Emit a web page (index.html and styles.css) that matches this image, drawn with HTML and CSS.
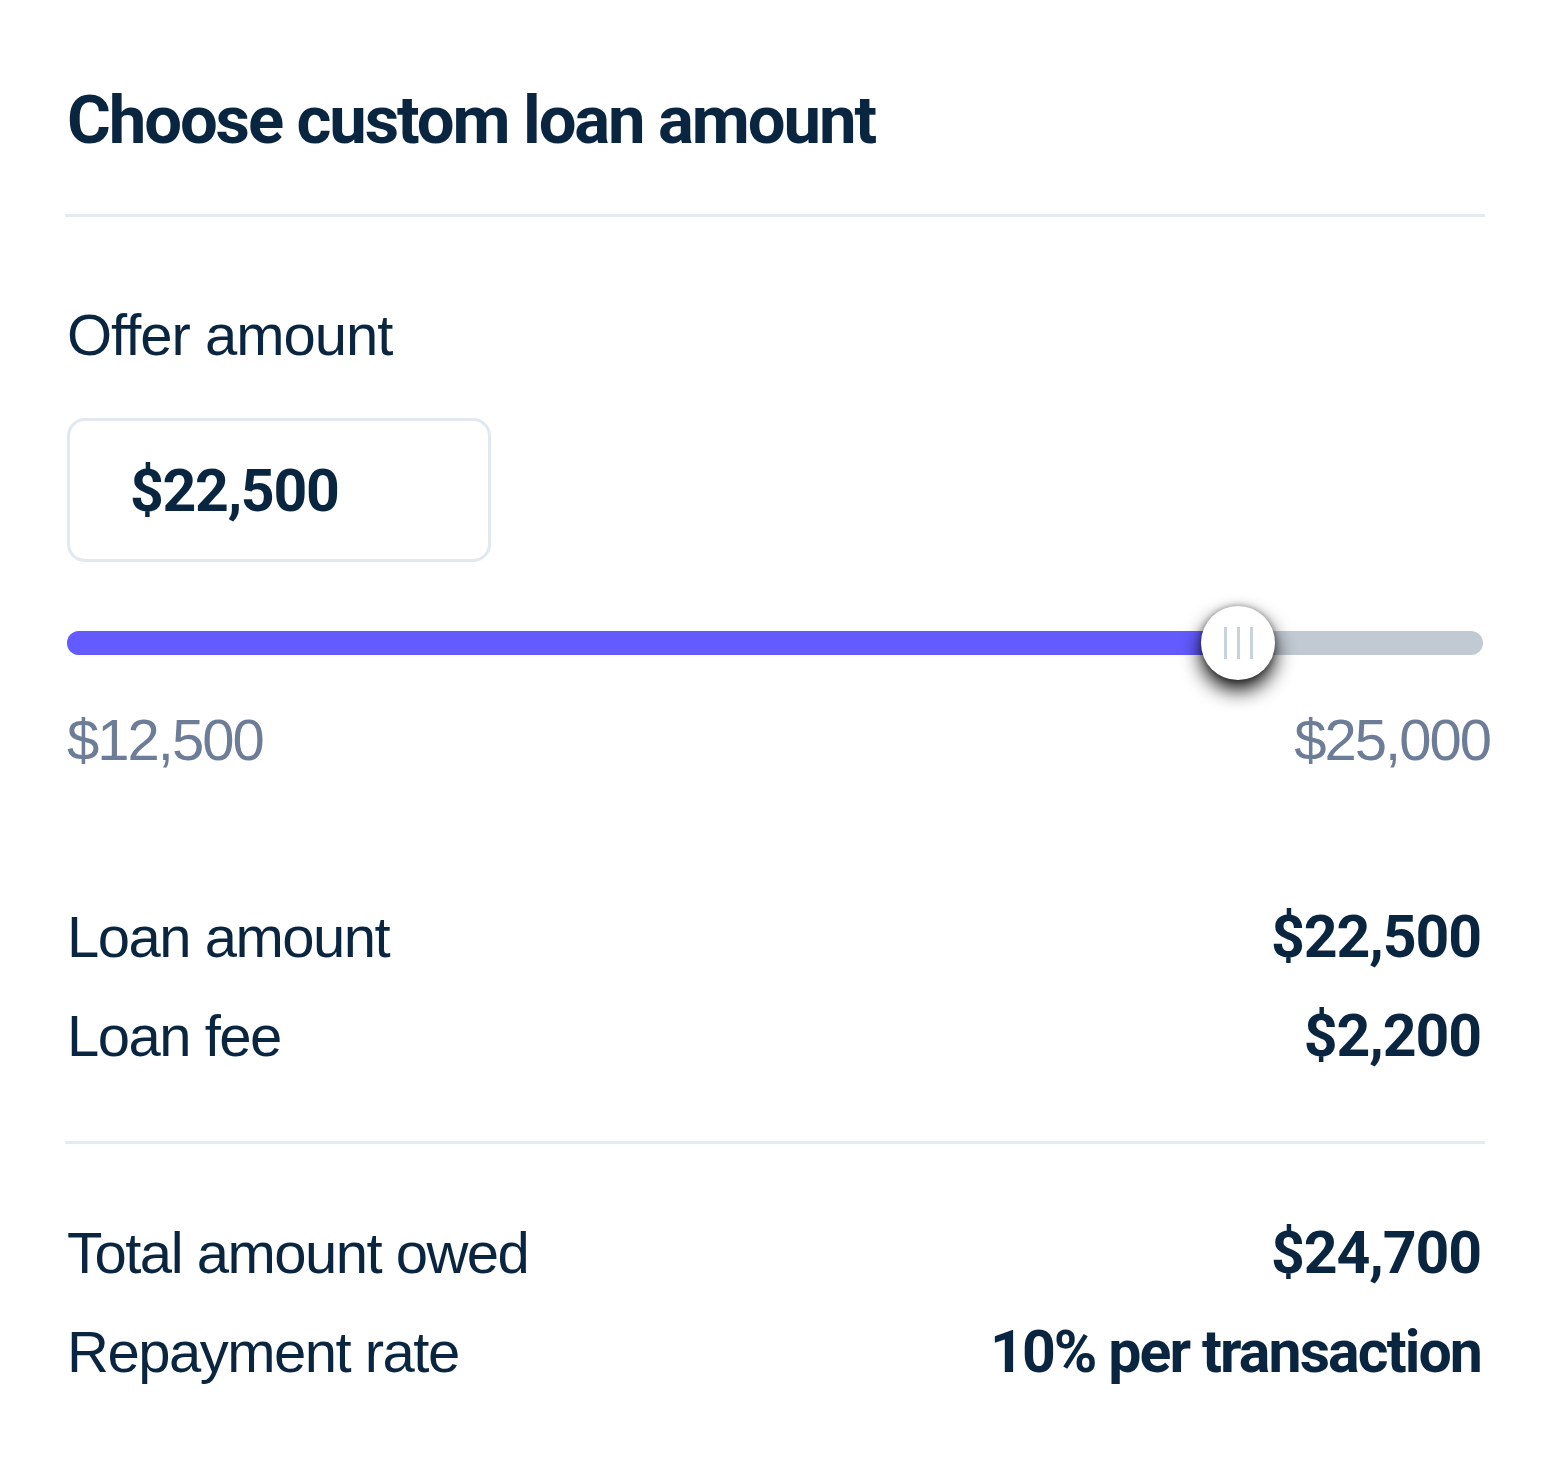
FILE: index.html
```html
<!DOCTYPE html>
<html lang="en">
<head>
    <meta charset="UTF-8">
    <meta name="viewport" content="width=device-width, initial-scale=1.0">
    <title>Choose custom loan amount</title>
    <link rel="stylesheet" href="styles.css">
</head>
<body>

    <div class="card">
        <h1 class="card-title">Choose custom loan amount</h1>
        <hr class="divider">

        <label class="field-label" for="offerAmount">Offer amount</label>
        <div class="amount-box" id="offerAmount">$22,500</div>

        <div class="slider">
            <div class="track">
                <div class="fill" style="width: 82.7%"></div>
            </div>
            <div class="thumb" style="left: 82.7%">
                <span></span><span></span><span></span>
            </div>
        </div>
        <div class="range-labels">
            <span>$12,500</span>
            <span>$25,000</span>
        </div>

        <div class="summary">
            <div class="row"><span>Loan amount</span><strong>$22,500</strong></div>
            <div class="row"><span>Loan fee</span><strong>$2,200</strong></div>
        </div>
        <hr class="divider">
        <div class="summary summary-total">
            <div class="row"><span>Total amount owed</span><strong>$24,700</strong></div>
            <div class="row"><span>Repayment rate</span><strong class="text-value">10% per transaction</strong></div>
        </div>
    </div>

</body>
</html>
```

FILE: styles.css
```css
body {
    margin: 0;
    background: #ffffff;
    font-family: "Liberation Sans", Arial, sans-serif;
    color: #0a2540;
}
.card {
    width: 1420px;
    padding: 79px 0 60px 65px;
}
.card-title {
    margin: 0;
    font-family: Roboto, "Liberation Sans", sans-serif;
    font-size: 67px;
    line-height: 82px;
    font-weight: 700;
    letter-spacing: -2.1px;
    padding-left: 2px;
}
.divider {
    border: none;
    height: 3px;
    background: #e6ebf1;
    margin: 53px 0 0;
}
.field-label {
    display: block;
    margin-top: 83px;
    padding-left: 2px;
    font-size: 58px;
    line-height: 70px;
    letter-spacing: -1px;
}
.amount-box {
    box-sizing: border-box;
    width: 424px;
    height: 144px;
    margin: 48px 0 0 2px;
    padding-left: 60px;
    border: 3px solid #e3e8ee;
    border-radius: 18px;
    display: flex;
    align-items: center;
    font-family: Roboto, "Liberation Sans", sans-serif;
    font-size: 59px;
    font-weight: 700;
    letter-spacing: -1.3px;
}
.slider {
    position: relative;
    margin: 69px 2px 0 2px;
    height: 24px;
}
.track {
    height: 24px;
    border-radius: 12px;
    background: #c1c9d2;
    overflow: hidden;
}
.fill {
    height: 100%;
    background: #635bff;
}
.thumb {
    position: absolute;
    top: 50%;
    width: 74px;
    height: 74px;
    border-radius: 50%;
    background: #ffffff;
    transform: translate(-50%, -50%);
    box-shadow: 0 10px 20px rgba(0, 0, 0, 0.95), 0 0 6px rgba(0, 0, 0, 0.35);
    display: flex;
    justify-content: center;
    align-items: center;
    gap: 10px;
}
.thumb span {
    width: 3px;
    height: 32px;
    background: #c8d2df;
}
.range-labels {
    display: flex;
    justify-content: space-between;
    margin: 50px -5px 0 2px;
    font-size: 58px;
    line-height: 70px;
    letter-spacing: -2px;
    color: #6d7d98;
}
.summary {
    margin-top: 127px;
    padding: 0 4px 0 2px;
}
.summary-total {
    margin-top: 74px;
}
.summary + .divider {
    margin-top: 70px;
}
.row {
    display: flex;
    justify-content: space-between;
    font-size: 58px;
    line-height: 70px;
    letter-spacing: -1.5px;
}
.row + .row {
    margin-top: 29px;
}
.row strong {
    font-family: Roboto, "Liberation Sans", sans-serif;
    font-size: 59px;
    font-weight: 700;
    letter-spacing: -1.1px;
}
.row .text-value {
    letter-spacing: -1.9px;
}
```
